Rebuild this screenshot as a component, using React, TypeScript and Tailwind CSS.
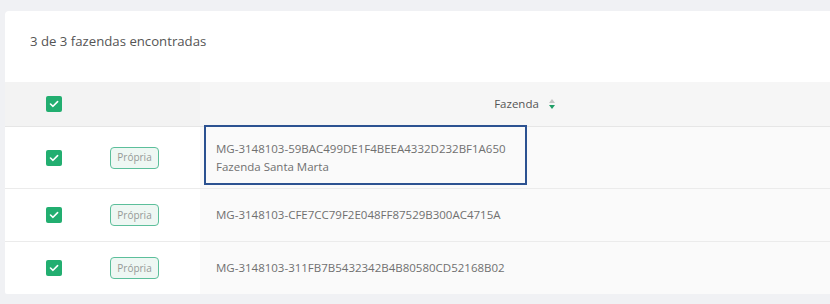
import React from "react";

function Check() {
  return (
    <div className="w-4 h-4 rounded-[2px] bg-[#22ae70] flex items-center justify-center">
      <svg width="10" height="8" viewBox="0 0 10 8" fill="none">
        <path d="M1.5 4 L4 6.3 L8.6 1.6" stroke="white" strokeWidth="1.6" strokeLinecap="round" strokeLinejoin="round" />
      </svg>
    </div>
  );
}

function Badge() {
  return (
    <div className="w-[49px] h-[22px] rounded-[4px] border border-[#5cbf9b] bg-[#eef7f3] flex items-center justify-center text-[10px] text-[#959a97]">
      Própria
    </div>
  );
}

const rows = [
  { id: "MG-3148103-59BAC499DE1F4BEEA4332D232BF1A650", name: "Fazenda Santa Marta", h: "h-[62px]", hl: true },
  { id: "MG-3148103-CFE7CC79F2E048FF87529B300AC4715A", name: "", h: "h-[53px]", hl: false },
  { id: "MG-3148103-311FB7B5432342B4B80580CD52168B02", name: "", h: "h-[52px]", hl: false },
];

export default function App() {
  return (
    <div
      className="w-[830px] h-[304px] overflow-hidden bg-[#f0f1f4] pt-[11px] pl-[5px]"
      style={{ fontFamily: '"Open Sans", sans-serif' }}
    >
      <div className="w-[845px] bg-white rounded-tl-[4px] rounded-bl-[2px]">
        <div className="h-[71px] pt-[21px] pl-[25px] text-[13.2px] leading-[18px] text-[#555]">
          3 de 3 fazendas encontradas
        </div>
        <div className="flex h-[45px] border-b border-[#e6e6e6]">
          <div className="w-[98px] bg-[#f3f3f3] flex items-center justify-center">
            <Check />
          </div>
          <div className="w-[97px] bg-[#f3f3f3]" />
          <div className="flex-1 bg-[#f6f6f6] flex items-center justify-center gap-[9px] text-[11.5px] text-[#555] font-medium">
            <span>Fazenda</span>
            <svg width="8" height="12" viewBox="0 0 8 12">
              <path d="M4 1 L7 5 L1 5 Z" fill="#c4c4c4" />
              <path d="M4 11 L7 7 L1 7 Z" fill="#1f9e66" />
            </svg>
          </div>
        </div>
        {rows.map((r, i) => (
          <div key={i} className={`flex ${r.h} ${i < 2 ? "border-b border-[#ebebeb]" : ""}`}>
            <div className="w-[98px] flex items-center justify-center">
              <Check />
            </div>
            <div className="w-[97px] flex items-center pl-[7px]">
              <Badge />
            </div>
            <div className="flex-1 bg-[#fafafa] relative flex flex-col justify-center pl-[16px] text-[11.5px] text-[#707070] leading-[18px]">
              <span>{r.id}</span>
              {r.name && <span>{r.name}</span>}
              {r.hl && (
                <div className="absolute left-[4px] top-[-2px] w-[323px] h-[60px] border-2 border-[#2c5291]" />
              )}
            </div>
          </div>
        ))}
      </div>
    </div>
  );
}
